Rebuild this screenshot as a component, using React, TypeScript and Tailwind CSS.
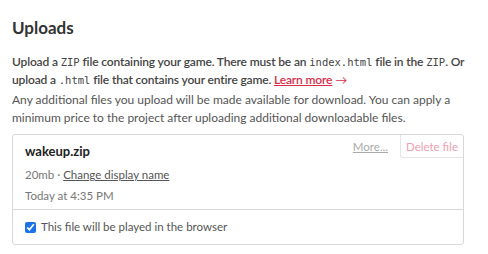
import { ReactElement } from "react";

export default function App(): ReactElement {
  return (
    <div className="w-[488px] h-[254px] bg-white pl-3 pt-[16px] font-['Lato',sans-serif] text-[#444]">
      <div className="w-[452px]">
        {/* Section heading */}
        <h2 className="text-[17px] font-bold text-[#333] leading-6 mb-[13px]">Uploads</h2>
        <p className="w-[466px] text-[12px] leading-[18px] font-semibold text-[#444] tracking-[-0.15px] mb-[2px]">
          Upload a <code className="font-['DejaVu_Sans_Mono',monospace] text-[10.5px] tracking-normal font-normal">ZIP</code> file containing your game. There must be an{" "}
          <code className="font-['DejaVu_Sans_Mono',monospace] text-[10.5px] tracking-normal font-normal">index.html</code> file in the{" "}
          <code className="font-['DejaVu_Sans_Mono',monospace] text-[10.5px] tracking-normal font-normal">ZIP</code>. Or upload a{" "}
          <code className="font-['DejaVu_Sans_Mono',monospace] text-[10.5px] tracking-normal font-normal">.html</code> file that contains your entire game.{" "}
          <a className="text-[#da2c49] underline">Learn more</a> <span className="text-[#da2c49] font-normal">→</span>
        </p>
        <p className="text-[12px] leading-[18px] text-[#555] mb-[7px]">
          Any additional files you upload will be made available for download. You can apply a minimum price to the project after uploading additional downloadable files.
        </p>
        {/* Upload card */}
        <div className="border border-[#d8d8d8] rounded-[3px] w-[452px]">
          <div className="flex justify-between">
            <div className="pl-3 pt-[6px] pb-[5px]">
              <div className="text-[13px] font-bold text-[#222] leading-5">wakeup.zip</div>
              <div className="text-[11.5px] text-[#777] leading-4 mt-[6px]">
                20mb · <a className="underline text-[#555]">Change display name</a>
              </div>
              <div className="text-[11.5px] text-[#777] leading-4 mt-[5px]">Today at 4:35 PM</div>
            </div>
            <div className="flex items-start text-[11.5px]">
              <a className="underline text-[#aaa] mt-[3px] mr-[12px]">More...</a>
              <span className="border-l border-b border-[#e4e4e4] rounded-bl-[3px] text-[#f0a0ae] px-[5px] pt-[3px] pb-[2px]">Delete file</span>
            </div>
          </div>
          <label className="flex items-center gap-[5px] border-t border-[#d8d8d8] px-3 h-[35px] text-[11.5px] text-[#555]">
            <input type="checkbox" defaultChecked className="w-[11px] h-[11px] accent-[#1a73e8]" />
            This file will be played in the browser
          </label>
        </div>
      </div>
    </div>
  );
}
